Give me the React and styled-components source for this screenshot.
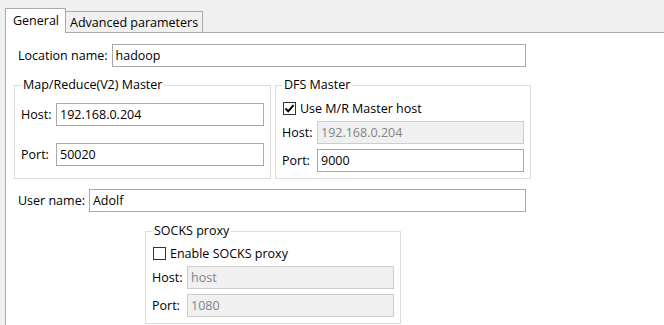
import React from "react";
import styled, { createGlobalStyle } from "styled-components";

const GlobalStyle = createGlobalStyle`
  html, body { margin: 0; padding: 0; background: #f0f0f0; }
  body {
    font-family: "Open Sans", "Noto Sans", sans-serif;
    font-size: 12.5px;
    color: #000;
  }
  * { box-sizing: border-box; }
`;

const Root = styled.div`
  width: 664px;
  height: 325px;
  overflow: hidden;
  padding: 8px 0 0 5px;
  display: flex;
  flex-direction: column;
  background: #f0f0f0;
`;

const TabStrip = styled.div`
  display: flex;
  align-items: flex-end;
  height: 25px;
  margin-bottom: -1px;
  position: relative;
  z-index: 1;
`;

const Tab = styled.div`
  display: flex;
  align-items: center;
  height: ${(p) => (p.$active ? "25px" : "22px")};
  padding: ${(p) => (p.$active ? "0 6px 2px 7px" : "0 4px 0 4px")};
  background: ${(p) => (p.$active ? "#fff" : "#f0f0f0")};
  border: 1px solid #a9a9a9;
  border-bottom: ${(p) => (p.$active ? "none" : "1px solid #a9a9a9")};
  border-left: ${(p) => (p.$first ? "1px solid #a9a9a9" : "none")};
  white-space: nowrap;
`;

const Panel = styled.div`
  flex: 1;
  background: #fff;
  border-top: 1px solid #a9a9a9;
  border-left: 1px solid #a9a9a9;
  padding: 11px 0 0 0;
  display: flex;
  flex-direction: column;
`;

const FieldRow = styled.div`
  display: flex;
  align-items: center;
  gap: 4px;
  width: 508px;
  margin-left: 12px;
  margin-top: ${(p) => p.$mt || 0}px;
`;

const Label = styled.span`
  white-space: nowrap;
`;

const TextInput = styled.input`
  flex: 1;
  min-width: 0;
  height: 23px;
  padding: 0 3px;
  font: inherit;
  color: ${(p) => (p.disabled ? "#838383" : "#000")};
  background: ${(p) => (p.disabled ? "#f0f0f0" : "#fff")};
  border: 1px solid ${(p) => (p.disabled ? "#cccccc" : "#a9a9a9")};
  outline: none;
  margin: 0;
`;

const GroupRow = styled.div`
  display: flex;
  gap: 4px;
  margin-left: 8px;
  margin-top: 10px;
`;

const Group = styled.fieldset`
  width: ${(p) => p.$w}px;
  margin: 0;
  margin-left: ${(p) => p.$ml || 0}px;
  margin-top: ${(p) => p.$mt || 0}px;
  padding: 0 6px 6px 6px;
  border: 1px solid #dcdcdc;
  min-width: 0;
`;

const Legend = styled.legend`
  padding: 0 2px;
  line-height: 16px;
  height: 16px;
`;

const Grid = styled.div`
  display: grid;
  grid-template-columns: 35px 1fr;
  align-items: center;
  row-gap: ${(p) => p.$gap}px;
  margin-top: ${(p) => p.$mt}px;
  padding-bottom: ${(p) => p.$pb || 0}px;
`;

const CheckRow = styled.label`
  display: flex;
  align-items: center;
  gap: 4px;
  height: 16px;
  margin-top: ${(p) => p.$mt}px;
  margin-left: 1px;
`;

const Box = styled.span`
  width: 13px;
  height: 13px;
  border: 1px solid #333;
  background: #fff;
  display: flex;
  align-items: center;
  justify-content: center;
`;

const Check = ({ checked }) => (
  <Box>
    {checked && (
      <svg width="11" height="11" viewBox="0 0 11 11">
        <path d="M1.5 5.5 L4.2 8.3 L9.5 2.2" fill="none" stroke="#000" strokeWidth="2" />
      </svg>
    )}
  </Box>
);

export default function App() {
  return (
    <>
      <GlobalStyle />
      <Root>
        <TabStrip>
          <Tab $active $first>General</Tab>
          <Tab>Advanced parameters</Tab>
        </TabStrip>
        <Panel>
          <FieldRow>
            <Label>Location name:</Label>
            <TextInput defaultValue="hadoop" />
          </FieldRow>

          <GroupRow>
            <Group $w={257}>
              <Legend>Map/Reduce(V2) Master</Legend>
              <Grid $gap={17} $mt={10} $pb={6}>
                <Label>Host:</Label>
                <TextInput defaultValue="192.168.0.204" />
                <Label>Port:</Label>
                <TextInput defaultValue="50020" />
              </Grid>
            </Group>
            <Group $w={256}>
              <Legend>DFS Master</Legend>
              <CheckRow $mt={7}>
                <Check checked />
                <span>Use M/R Master host</span>
              </CheckRow>
              <Grid $gap={5} $mt={5}>
                <Label>Host:</Label>
                <TextInput disabled defaultValue="192.168.0.204" />
                <Label>Port:</Label>
                <TextInput defaultValue="9000" />
              </Grid>
            </Group>
          </GroupRow>

          <FieldRow $mt={10}>
            <Label>User name:</Label>
            <TextInput defaultValue="Adolf" />
          </FieldRow>

          <Group $w={256} $ml={139} $mt={11}>
            <Legend>SOCKS proxy</Legend>
            <CheckRow $mt={6}>
              <Check />
              <span>Enable SOCKS proxy</span>
            </CheckRow>
            <Grid $gap={5} $mt={5}>
              <Label>Host:</Label>
              <TextInput disabled defaultValue="host" />
              <Label>Port:</Label>
              <TextInput disabled defaultValue="1080" />
            </Grid>
          </Group>
        </Panel>
      </Root>
    </>
  );
}
